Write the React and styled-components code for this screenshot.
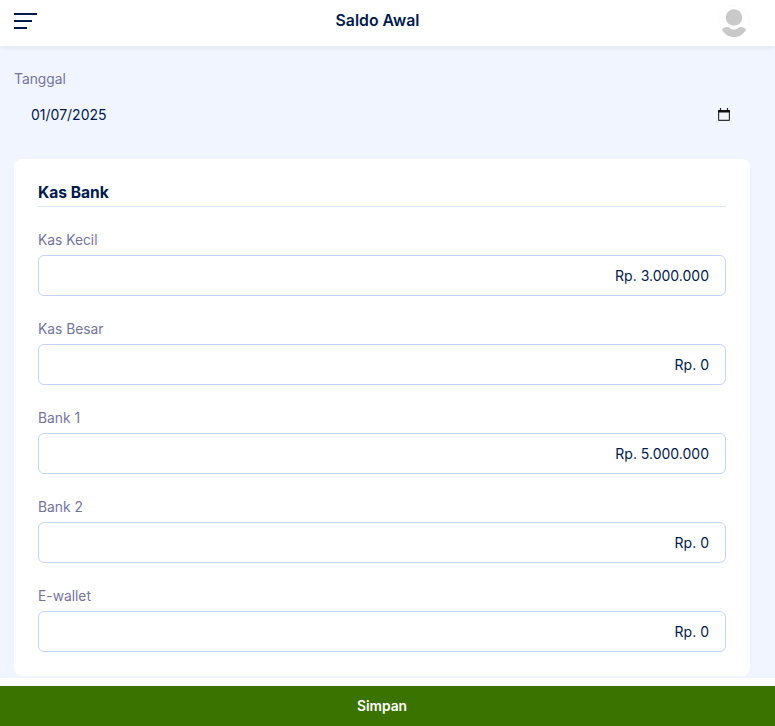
import React from 'react';
import styled, { createGlobalStyle } from 'styled-components';

const GlobalStyle = createGlobalStyle`
  html, body {
    margin: 0;
    padding: 0;
    height: 100%;
    background: #f1f5ff;
  }
  * {
    box-sizing: border-box;
  }
`;

const Page = styled.div`
  height: 100vh;
  display: flex;
  flex-direction: column;
  overflow: hidden;
  font-family: 'Inter', 'Liberation Sans', sans-serif;
  color: #001a4d;
`;

const Header = styled.header`
  height: 46px;
  flex: none;
  background: #fff;
  display: flex;
  align-items: center;
  justify-content: space-between;
  padding: 0 25px 4px 14px;
  box-shadow: 0 1px 6px rgba(0, 26, 77, 0.08);
  position: relative;
`;

const Burger = styled.div`
  display: flex;
  flex-direction: column;
  gap: 5px;
  width: 23px;
`;

const BurgerLine = styled.span`
  display: block;
  height: 2px;
  width: ${(p) => p.$w}px;
  background: #001a4d;
`;

const Title = styled.h1`
  margin: 0;
  font-size: 15.8px;
  font-weight: 600;
  flex: 1;
  text-align: center;
  padding: 0 0 2px 0;
`;

const Content = styled.main`
  flex: 1;
  min-height: 0;
  padding: 24px 25px 0 14px;
`;

const DateLabel = styled.div`
  font-size: 13.8px;
  line-height: 18px;
  color: #74749f;
`;

const DateRow = styled.div`
  height: 41px;
  margin-top: 6px;
  padding: 0 20px 0 17px;
  display: flex;
  align-items: center;
  justify-content: space-between;
  font-size: 14px;
`;

const Card = styled.section`
  margin-top: 24px;
  background: #fff;
  border-radius: 8px;
  padding: 24px;
  height: 517px;
`;

const CardTitle = styled.h2`
  margin: 0;
  font-size: 15.6px;
  font-weight: 700;
  line-height: 18px;
  padding: 1px 0 4px;
  border-bottom: 1px solid #dbe6ff;
  color: #001a4d;
`;

const Fields = styled.div`
  margin-top: 24px;
  display: flex;
  flex-direction: column;
  gap: 24px;
`;

const Field = styled.div`
  display: flex;
  flex-direction: column;
  gap: 6px;
`;

const FieldLabel = styled.label`
  font-size: 13.8px;
  line-height: 18px;
  color: #74749f;
`;

const AmountInput = styled.input`
  height: 41px;
  width: 100%;
  border: 1px solid #c3d4fb;
  border-radius: 6px;
  background: #fff;
  padding: 0 16px;
  text-align: right;
  font-family: inherit;
  font-size: 14px;
  color: #001a4d;
  outline: none;
`;

const Footer = styled.footer`
  flex: none;
  background: #fff;
  padding-top: 8px;
`;

const SaveButton = styled.button`
  display: block;
  width: 100%;
  height: 40px;
  border: none;
  padding: 0 11px 0 0;
  background: #3b7300;
  color: #fff;
  font-family: inherit;
  font-size: 13.8px;
  font-weight: 600;
`;

const Avatar = () => (
  <svg width="32" height="32" viewBox="0 0 32 32" aria-hidden="true">
    <circle cx="16" cy="16" r="15.8" fill="#fff" stroke="#f6f6f6" strokeWidth="0.4" />
    <circle cx="16" cy="12.5" r="8.3" fill="#c9c9c9" />
    <path d="M4 24.500C6.500 22 9.500 21.500 11 22.500c3 2.800 7 2.800 10 0 1.500-1 4.500-.5 7 2C25.500 29.500 21 32 16 32S6.500 29.500 4 24.500z" fill="#c9c9c9" />
  </svg>
);

const CalendarIcon = () => (
  <svg width="12" height="13" viewBox="0 0 12 13" aria-hidden="true">
    <path d="M2.500 0v2M9.500 0v2" stroke="#222" strokeWidth="1.200" />
    <rect x="0.600" y="2.600" width="10.800" height="9.800" rx="0.500" fill="none" stroke="#333" strokeWidth="1.200" />
    <rect x="0" y="2" width="12" height="2.500" fill="#111" />
  </svg>
);

const accounts = [
  { label: 'Kas Kecil', value: 'Rp. 3.000.000' },
  { label: 'Kas Besar', value: 'Rp. 0' },
  { label: 'Bank 1', value: 'Rp. 5.000.000' },
  { label: 'Bank 2', value: 'Rp. 0' },
  { label: 'E-wallet', value: 'Rp. 0' },
];

export default function App() {
  return (
    <>
      <GlobalStyle />
      <Page>
        <Header>
          <Burger>
            <BurgerLine $w={23} />
            <BurgerLine $w={18} />
            <BurgerLine $w={13} />
          </Burger>
          <Title>Saldo Awal</Title>
          <Avatar />
        </Header>
        <Content>
          <DateLabel>Tanggal</DateLabel>
          <DateRow>
            <span>01/07/2025</span>
            <CalendarIcon />
          </DateRow>
          <Card>
            <CardTitle>Kas Bank</CardTitle>
            <Fields>
              {accounts.map((a) => (
                <Field key={a.label}>
                  <FieldLabel>{a.label}</FieldLabel>
                  <AmountInput defaultValue={a.value} />
                </Field>
              ))}
            </Fields>
          </Card>
        </Content>
        <Footer>
          <SaveButton>Simpan</SaveButton>
        </Footer>
      </Page>
    </>
  );
}
